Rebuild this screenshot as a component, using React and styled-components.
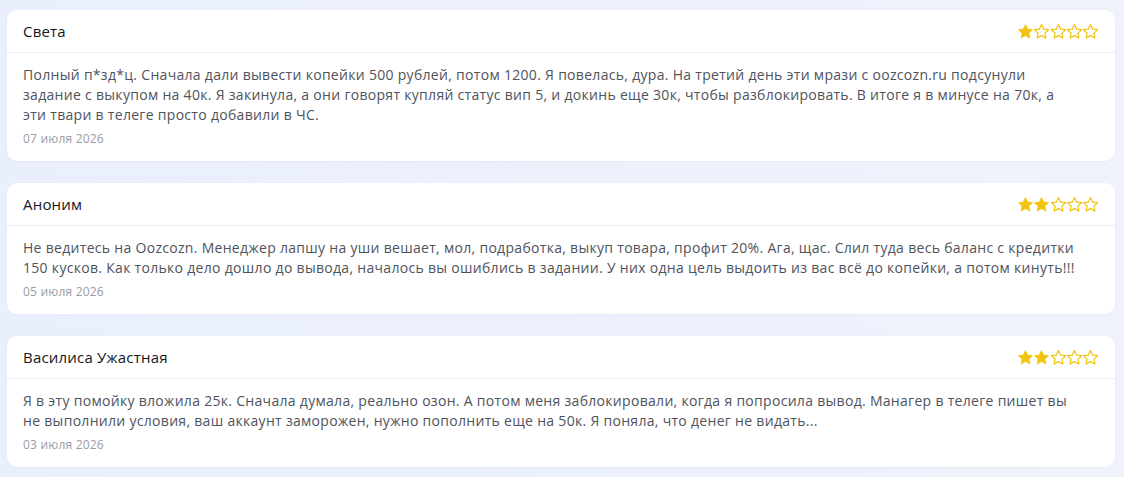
import { Fragment } from 'react'
import styled, { createGlobalStyle } from 'styled-components'

const GlobalStyle = createGlobalStyle`
  html, body {
    margin: 0;
    padding: 0;
    background: linear-gradient(90deg, #e9effd 0%, #f0f2fb 100%);
    font-family: 'Open Sans', 'Noto Sans', sans-serif;
  }
`

const reviews = [
  {
    id: 1,
    name: 'Света',
    rating: 1,
    lines: [
      'Полный п*зд*ц. Сначала дали вывести копейки 500 рублей, потом 1200. Я повелась, дура. На третий день эти мрази с oozcozn.ru подсунули',
      'задание с выкупом на 40к. Я закинула, а они говорят купляй статус вип 5, и докинь еще 30к, чтобы разблокировать. В итоге я в минусе на 70к, а',
      'эти твари в телеге просто добавили в ЧС.',
    ],
    date: '07 июля 2026',
  },
  {
    id: 2,
    name: 'Аноним',
    rating: 2,
    lines: [
      'Не ведитесь на Oozcozn. Менеджер лапшу на уши вешает, мол, подработка, выкуп товара, профит 20%. Ага, щас. Слил туда весь баланс с кредитки',
      '150 кусков. Как только дело дошло до вывода, началось вы ошиблись в задании. У них одна цель выдоить из вас всё до копейки, а потом кинуть!!!',
    ],
    date: '05 июля 2026',
  },
  {
    id: 3,
    name: 'Василиса Ужастная',
    rating: 2,
    lines: [
      'Я в эту помойку вложила 25к. Сначала думала, реально озон. А потом меня заблокировали, когда я попросила вывод. Манагер в телеге пишет вы',
      'не выполнили условия, ваш аккаунт заморожен, нужно пополнить еще на 50к. Я поняла, что денег не видать...',
    ],
    date: '03 июля 2026',
  },
]

function Star({ filled }) {
  return (
    <StarIcon viewBox="2 2 20 20" $filled={filled}>
      <path d="M12 2.8l2.85 6 6.55.8-4.85 4.55 1.3 6.55L12 17.45l-5.85 3.25 1.3-6.55L2.6 9.6l6.55-.8z" />
    </StarIcon>
  )
}

function Rating({ value }) {
  return (
    <Stars>
      {[1, 2, 3, 4, 5].map(i => <Star key={i} filled={i <= value} />)}
    </Stars>
  )
}

function ReviewCard({ review }) {
  return (
    <Card>
      <Header>
        <Name>{review.name}</Name>
        <Rating value={review.rating} />
      </Header>
      <Body>
        <Text>
          {review.lines.map((line, i) => (
            <Fragment key={i}>
              {i > 0 && <br />}
              {line}
            </Fragment>
          ))}
        </Text>
        <DateLine>{review.date}</DateLine>
      </Body>
    </Card>
  )
}

export default function App() {
  return (
    <>
      <GlobalStyle />
      <List>
        {reviews.map(r => <ReviewCard key={r.id} review={r} />)}
      </List>
    </>
  )
}

const List = styled.div`
  display: flex;
  flex-direction: column;
  gap: 22px;
  padding: 10px 9px 10px 7px;
`

const Card = styled.div`
  background: #fff;
  border-radius: 10px;
  box-shadow: 0 1px 3px rgba(40, 60, 120, .04);
`

const Header = styled.div`
  display: flex;
  align-items: center;
  justify-content: space-between;
  height: 42px;
  padding: 0 17px 0 16px;
  border-bottom: 1px solid #eceef3;
`

const Name = styled.div`
  font-size: 15px;
  font-weight: 500;
  letter-spacing: .2px;
  color: #15171c;
`

const Stars = styled.div`
  display: flex;
  gap: 1.25px;
`

const StarIcon = styled.svg`
  width: 15px;
  height: 15px;
  overflow: visible;
  fill: ${p => (p.$filled ? '#f1c40f' : 'none')};
  stroke: #f1c40f;
  stroke-width: ${p => (p.$filled ? 1 : 1.7)};
  stroke-linejoin: round;
`

const Body = styled.div`
  padding: 12px 16px 14px;
`

const Text = styled.p`
  margin: 0;
  font-size: 14px;
  line-height: 20px;
  letter-spacing: .3px;
  white-space: nowrap;
  color: #4f535c;
`

const DateLine = styled.div`
  margin-top: 6px;
  font-size: 12px;
  line-height: 16px;
  letter-spacing: .2px;
  color: #9a9ca3;
`
